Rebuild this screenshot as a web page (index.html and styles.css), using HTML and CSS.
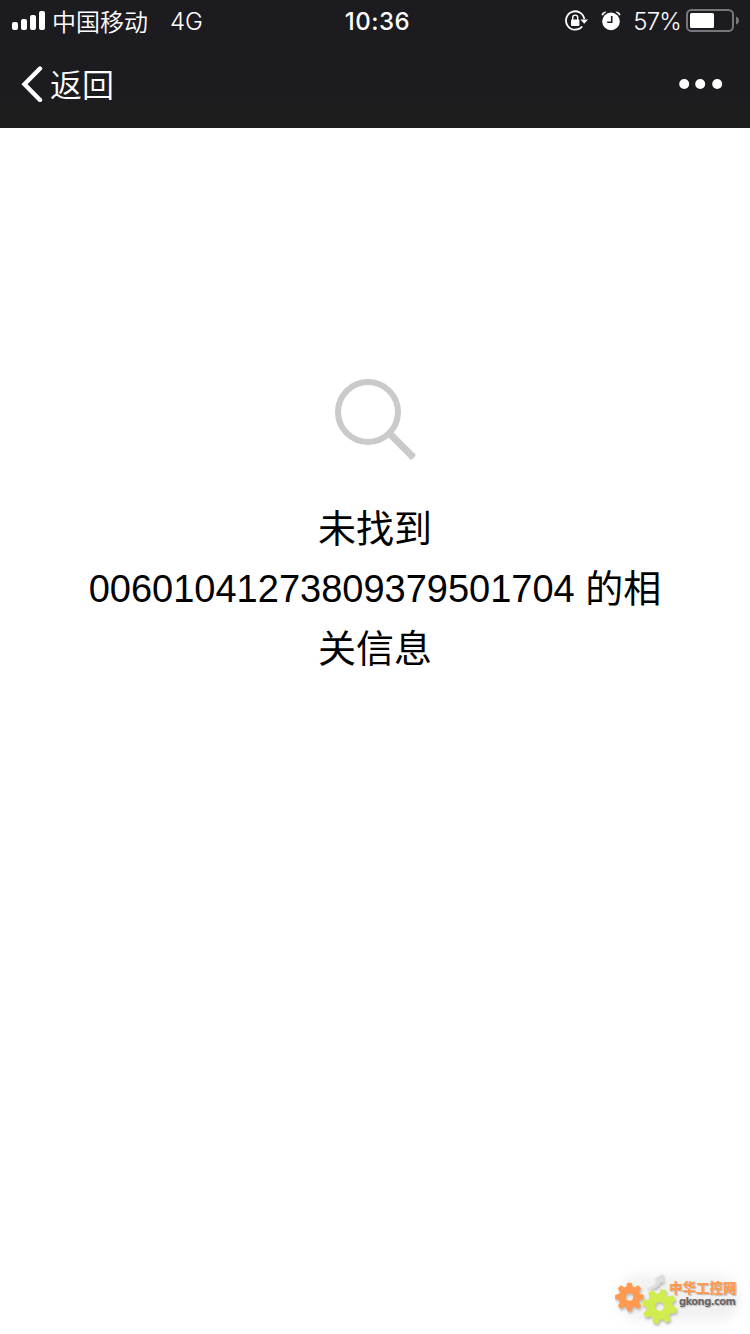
FILE: index.html
```html
<!DOCTYPE html>
<html lang="zh-CN">
<head>
<meta charset="utf-8">
<title>查询结果</title>
<link rel="stylesheet" href="styles.css">
</head>
<body>
<div class="screen">
  <header class="header">
    <div class="status">
      <div class="status-left">
        <svg class="signal" width="34" height="22" viewBox="0 0 34 22" fill="#fff">
          <rect x="0" y="12" width="6" height="8" rx="2"/>
          <rect x="9" y="9" width="6" height="11" rx="2"/>
          <rect x="18" y="5" width="6" height="15" rx="2"/>
          <rect x="27" y="1" width="6" height="19" rx="2"/>
        </svg>
        <span class="carrier">中国移动</span>
        <span class="network">4G</span>
      </div>
      <div class="time">10:36</div>
      <div class="status-right">
        <svg class="lock" width="24" height="22" viewBox="0 0 24 22">
          <path d="M17.2 16.5A9.2 9.2 0 1 1 19.3 9" fill="none" stroke="#fff" stroke-width="1.8"/>
          <path d="M15.400 9.5h7.600l-3.800 4.300z" fill="#fff"/>
          <rect x="6" y="9.5" width="8.4" height="6.5" rx="1" fill="#fff"/>
          <path d="M7.7 10V7.6a2.5 2.5 0 0 1 5 0V10" fill="none" stroke="#fff" stroke-width="1.4"/>
        </svg>
        <svg class="alarm" width="20" height="22" viewBox="0 0 20 22">
          <circle cx="10" cy="11.4" r="8.8" fill="#fff"/>
          <path d="M.5 5Q1 1.500 5.500 1.500L4.500 2.800Q3 3.500 1.800 5.500zM19.500 5Q19 1.500 14.500 1.500L15.500 2.800Q17 3.500 18.200 5.500z" fill="#fff"/>
          <path d="M10.7 6v6.200H6.2" fill="none" stroke="#1c1b20" stroke-width="1.6"/>
        </svg>
        <span class="percent">57%</span>
        <svg class="battery" width="53" height="24" viewBox="0 0 53 24">
          <rect x="1" y="1" width="46" height="21" rx="4.5" fill="none" stroke="#77767a" stroke-width="2"/>
          <rect x="4" y="4" width="24" height="15" rx="1.5" fill="#fff"/>
          <path d="M50 7.5q3 1 3 4t-3 4z" fill="#77767a"/>
        </svg>
      </div>
    </div>
    <nav class="nav">
      <a class="back">
        <svg width="22" height="36" viewBox="0 0 22 36"><path d="M19 2.500L3.500 18.200L19 34" fill="none" stroke="#fff" stroke-width="4.400" stroke-linecap="round"/></svg>
        <span>返回</span>
      </a>
      <svg class="more" width="44" height="12" viewBox="0 0 44 12" fill="#fff"><circle cx="5.200" cy="6" r="5"/><circle cx="21.200" cy="6" r="5"/><circle cx="38.200" cy="6" r="5"/></svg>
    </nav>
  </header>
  <main class="empty">
    <svg class="search" width="82" height="82" viewBox="0 0 82 82" fill="none" stroke="#cacaca">
      <circle cx="33" cy="33" r="30" stroke-width="6"/>
      <path d="M53.500 53.500L77 77" stroke-width="7"/>
      <path d="M76 78.500L78.500 76" stroke-width="4" stroke-linecap="round"/>
    </svg>
    <p class="message">未找到 00601041273809379501704 的相关信息</p>
  </main>
  <div class="watermark">
    <svg class="gears" width="64" height="60" viewBox="0 0 64 60">
      <defs>
        <g id="gear">
          <circle r="8.250" fill="none" stroke-width="8" stroke="currentColor"/>
          <g id="teeth" fill="currentColor">
            <path id="tooth" d="M-4.200-10L-2.400-16.500H2.400L4.200-10z"/>
            <use href="#tooth" transform="rotate(45)"/>
            <use href="#tooth" transform="rotate(90)"/>
            <use href="#tooth" transform="rotate(135)"/>
            <use href="#tooth" transform="rotate(180)"/>
            <use href="#tooth" transform="rotate(225)"/>
            <use href="#tooth" transform="rotate(270)"/>
            <use href="#tooth" transform="rotate(315)"/>
          </g>
        </g>
      </defs>
      <path d="M32 23q8 0 11-8l-3-1 9-5 1 9-3-1q-4 9-15 6z" fill="#dedede"/>
      <use class="gear-orange" href="#gear" transform="translate(15.500 32) scale(.87)"/>
      <use class="gear-green" href="#gear" transform="translate(45.500 41.500) rotate(14) scale(1.060)"/>
    </svg>
    <div class="brand">
      <span class="brand-name">中华工控网</span>
      <span class="brand-site">gkong.com</span>
    </div>
  </div>
</div>
</body>
</html>
```
FILE: styles.css
```css
body {
  margin: 0;
  background: #fff;
}

.screen {
  position: relative;
  width: 750px;
  height: 1334px;
  overflow: hidden;
  font-family: Inter, "Noto Sans CJK SC", sans-serif;
}

.header {
  height: 128px;
  background: linear-gradient(#1c1b20, #1c1b1f 60%, #1e1e1e);
  color: #fff;
}

.status {
  display: grid;
  grid-template-columns: 1fr auto 1fr;
  align-items: center;
  height: 40px;
  padding: 0 11px 0 12px;
  font-size: 24px;
  line-height: 40px;
}

.status-left,
.status-right {
  display: flex;
  align-items: center;
}

.status-right {
  justify-content: flex-end;
}

.carrier {
  margin-left: 6px;
  font-family: "Noto Sans CJK SC", sans-serif;
  font-weight: 350;
}

.network {
  padding-top: 2px;
  margin-left: 22px;
  font-weight: 350;
}

.time {
  padding-top: 2px;
  margin-left: 4px;
  font-weight: 550;
  letter-spacing: 0.5px;
}

.alarm {
  margin-left: 12px;
}

.percent {
  padding-top: 2px;
  margin: 0 5px 0 12px;
  font-weight: 350;
  letter-spacing: -0.8px;
}

.nav {
  display: flex;
  align-items: center;
  justify-content: space-between;
  height: 88px;
  padding: 0 27px 0 21px;
}

.back {
  display: flex;
  align-items: center;
  gap: 7px;
  font: 32px/88px "Noto Sans CJK SC", sans-serif;
  font-weight: 350;
}

.back span {
  padding-bottom: 2px;
}

.empty {
  display: flex;
  flex-direction: column;
  align-items: center;
  padding: 251px 80px 0;
}

.search {
  padding-left: 2px;
}

.message {
  margin: 38px 0 0;
  font: 38px/60px "Liberation Sans", "Noto Sans CJK SC", sans-serif;
  font-weight: 400;
  text-align: center;
  color: #000;
}

.watermark {
  position: absolute;
  right: 8px;
  bottom: 5px;
  display: flex;
  width: 128px;
  height: 64px;
}

.watermark::before {
  content: "";
  position: absolute;
  inset: 10px 2px 8px 4px;
  z-index: -1;
  border-radius: 24px;
  background: #f1f1f1;
  filter: blur(6px);
}

.gears {
  flex: none;
  overflow: visible;
  filter: drop-shadow(1px 2px 1px #bbb);
}

.gear-orange {
  color: #ff9a50;
}

.gear-green {
  color: #d1ec50;
}

.brand {
  display: flex;
  flex-direction: column;
  padding-top: 14px;
  margin-left: -9px;
  text-shadow: 1px 1px 1px #bbb;
  white-space: nowrap;
}

.brand-name {
  font: 900 13.500px/17px "Noto Sans CJK SC", sans-serif;
  color: #ff9a50;
}

.brand-site {
  margin-left: 10px;
  font: bold 10px/12px "DejaVu Sans", sans-serif;
  letter-spacing: -0.6px;
  color: #666;
}
```
